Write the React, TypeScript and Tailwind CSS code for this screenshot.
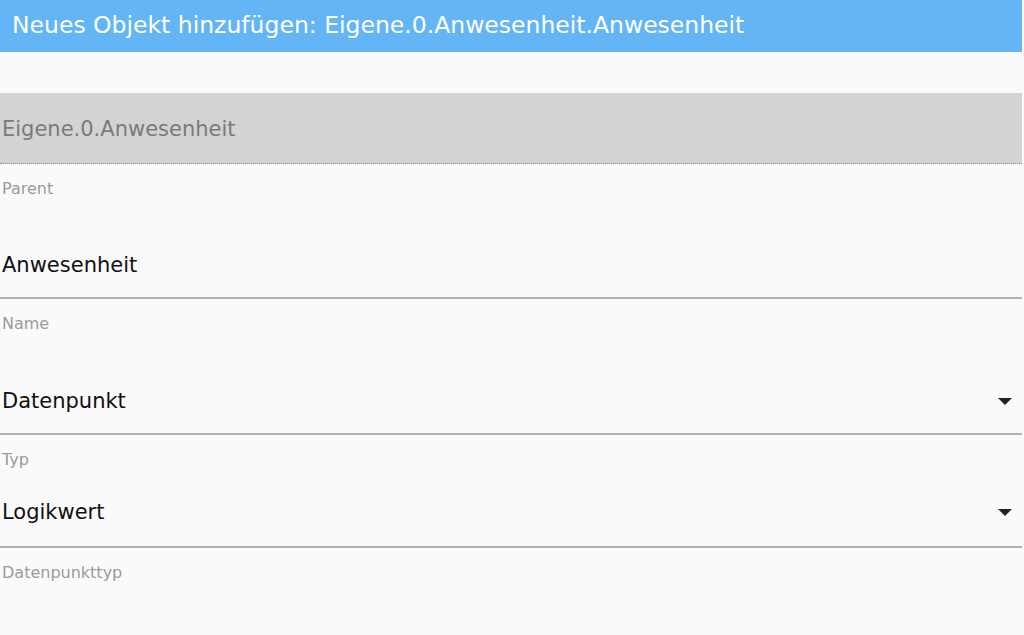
function Caret() {
  return (
    <svg className="w-[14px] h-[8px]" viewBox="0 0 14 8">
      <polygon points="0,0 14,0 7,7" fill="#222" />
    </svg>
  )
}

function Label({ text, className }: { text: string; className: string }) {
  return <div className={`text-[16px] leading-[24px] text-[#9b9b9b] pl-[2px] ${className}`}>{text}</div>
}

function Field({ value, select, className }: { value: string; select?: boolean; className: string }) {
  return (
    <div className={`w-[1022px] flex justify-between border-b-2 border-[#b0b0b0] text-[21px] leading-[30px] text-[#111] pl-[2px] ${className}`}>
      <span>{value}</span>
      {select && (
        <span className="pr-[10px] pt-[12px]">
          <Caret />
        </span>
      )}
    </div>
  )
}

export default function App() {
  return (
    <div className="w-[1024px] h-[635px] bg-[#fafafa] overflow-hidden" style={{ fontFamily: '"DejaVu Sans", "Noto Sans", sans-serif' }}>
      <div className="w-[1022px] h-[52px] bg-[#64b5f6] text-white text-[23.5px] pl-3 flex items-center">
        Neues Objekt hinzufügen: Eigene.0.Anwesenheit.Anwesenheit
      </div>
      <div className="mt-[41px] w-[1022px] h-[71px] bg-[#d3d3d3] border-b border-dotted border-[#8a8a8a] text-[21px] text-[#7a7a7a] pl-[2px] pt-[4px] flex items-center">
        Eigene.0.Anwesenheit
      </div>
      <Label text="Parent" className="pt-[13px] h-[86px]" />
      <Field value="Anwesenheit" className="h-[49px]" />
      <Label text="Name" className="pt-[13px] h-[87px]" />
      <Field value="Datenpunkt" select className="h-[49px]" />
      <Label text="Typ" className="pt-[13px] h-[62px]" />
      <Field value="Logikwert" select className="h-[51px]" />
      <Label text="Datenpunkttyp" className="pt-[13px]" />
    </div>
  )
}
